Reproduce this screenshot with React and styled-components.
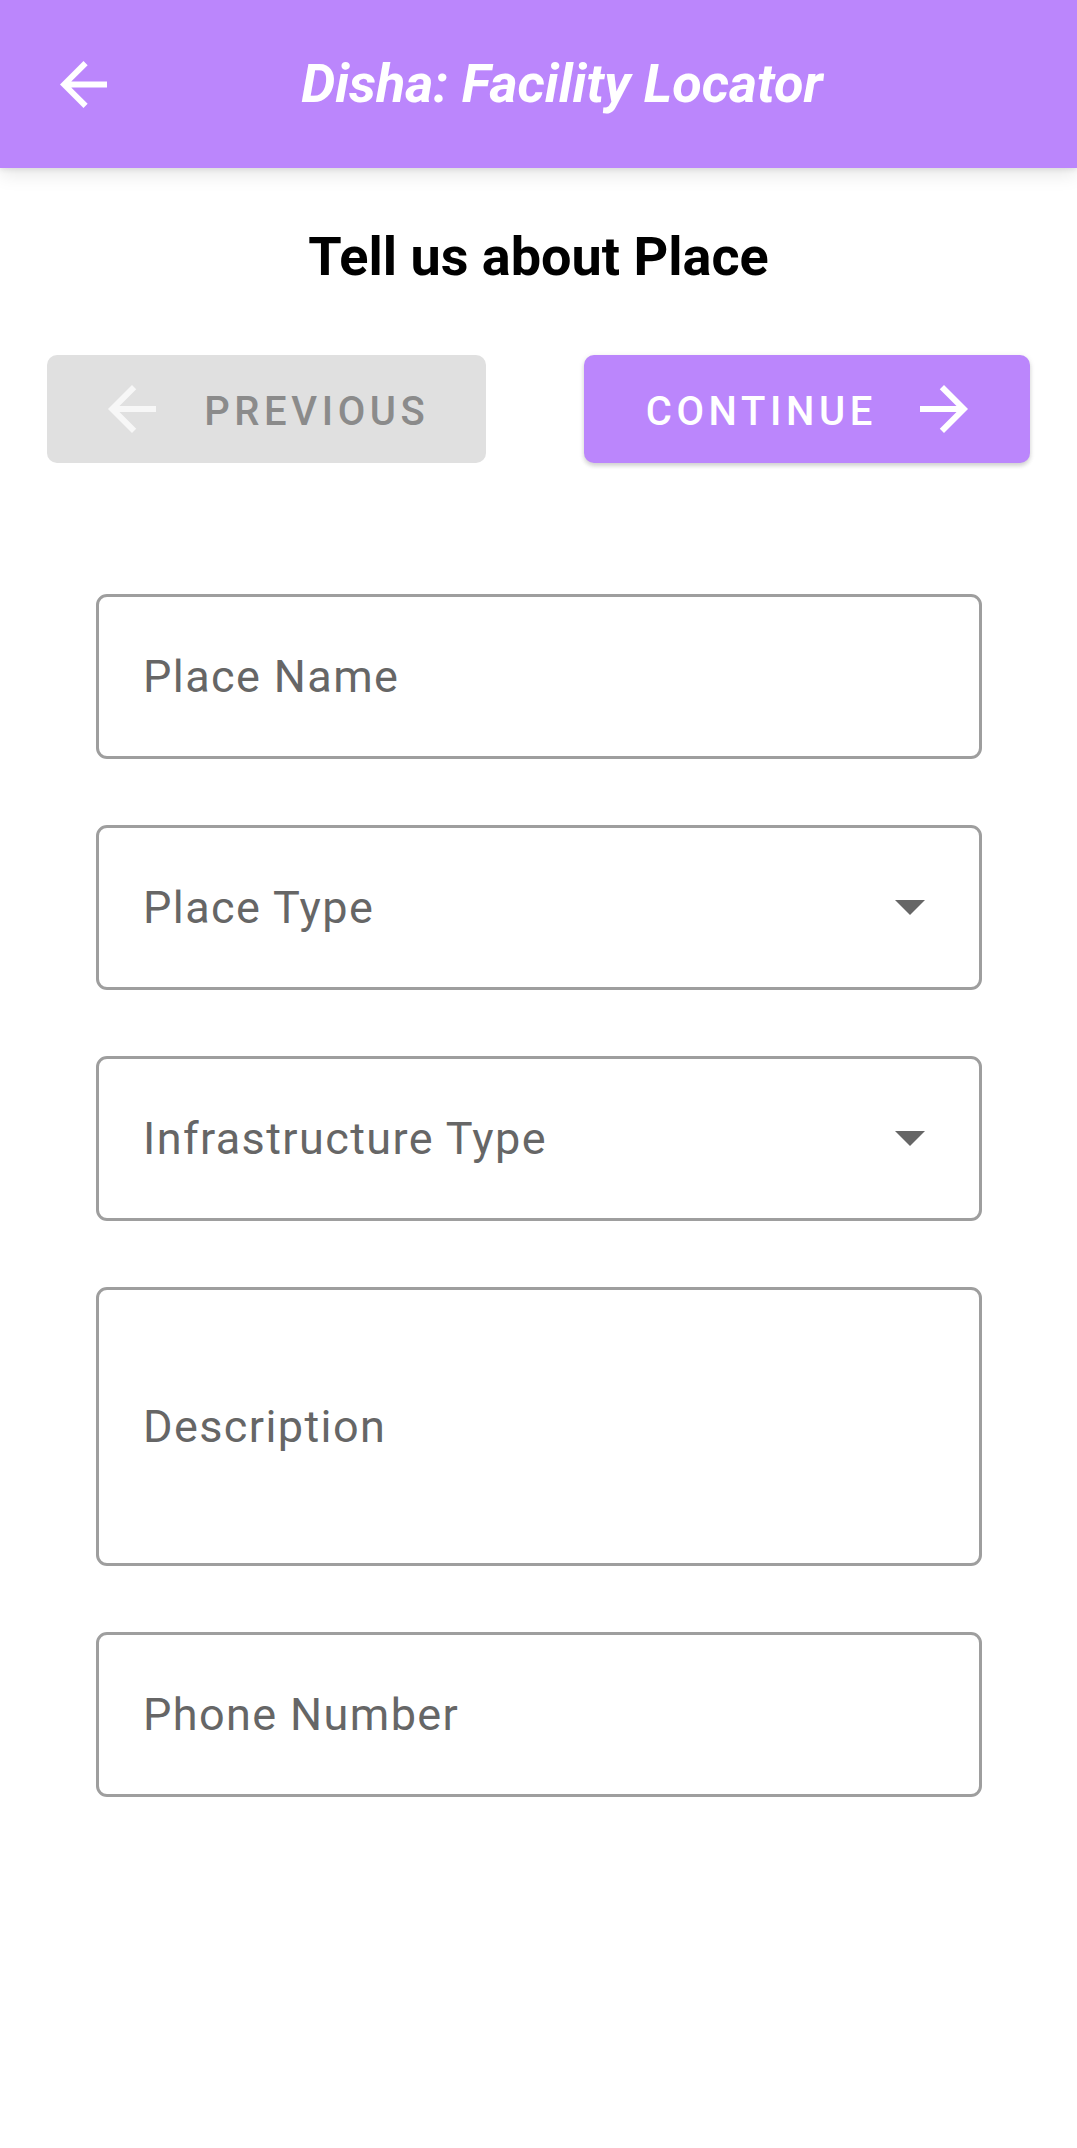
import React from "react";
import styled, { createGlobalStyle } from "styled-components";

const GlobalStyle = createGlobalStyle`
  html, body {
    margin: 0;
    padding: 0;
    background: #ffffff;
  }
  body {
    font-family: Roboto, "Noto Sans", "Liberation Sans", sans-serif;
    -webkit-font-smoothing: antialiased;
  }
  * { box-sizing: border-box; }
`;

const Page = styled.div`
  width: 1077px;
  min-height: 2148px;
  background: #ffffff;
  display: flex;
  flex-direction: column;
`;

const Header = styled.header`
  position: relative;
  z-index: 1;
  height: 168px;
  background: #bb86fc;
  display: flex;
  align-items: center;
  padding-left: 60px;
  box-shadow: 0 6px 18px rgba(0, 0, 0, 0.1), 0 2px 5px rgba(0, 0, 0, 0.08);
`;

const BackButton = styled.button`
  border: none;
  background: transparent;
  padding: 0;
  margin: 0;
  width: 47px;
  height: 47px;
  display: flex;
  align-items: center;
  justify-content: center;
  color: #ffffff;
  cursor: pointer;
`;

const HeaderIcon = styled.svg`
  width: 47px;
  height: 47px;
  fill: #ffffff;
`;

const HeaderTitle = styled.h1`
  flex: 1;
  margin: 0 60px 0 0;
  text-align: center;
  color: #ffffff;
  font-family: Roboto, "Liberation Sans", sans-serif;
  font-size: 54px;
  font-weight: 700;
  font-style: italic;
  line-height: 62px;
`;

const Heading = styled.h2`
  margin: 58px 0 0;
  text-align: center;
  color: #000000;
  font-family: Roboto, "Liberation Sans", sans-serif;
  font-size: 54px;
  font-weight: 700;
  line-height: 62px;
`;

const ButtonRow = styled.div`
  margin-top: 67px;
  padding: 0 47px;
  display: flex;
  justify-content: space-between;
`;

const StepButton = styled.button`
  width: ${(p) => p.$width}px;
  height: 108px;
  border: none;
  border-radius: 10px;
  background: ${(p) => (p.$primary ? "#bb86fc" : "#e0e0e0")};
  color: ${(p) => (p.$primary ? "#ffffff" : "#8b8b8b")};
  box-shadow: ${(p) =>
    p.$primary
      ? "0 3px 4px rgba(0,0,0,0.14), 0 1px 6px rgba(0,0,0,0.08)"
      : "none"};
  display: flex;
  align-items: center;
  justify-content: center;
  gap: 48px;
  padding: 0;
  cursor: pointer;
`;

const ButtonLabel = styled.span`
  font-family: Roboto, "Liberation Sans", sans-serif;
  font-size: 40px;
  font-weight: 500;
  letter-spacing: 4.6px;
  margin-right: -4.6px;
  padding-top: 5px;
  line-height: 1;
`;

const ButtonIcon = styled.svg`
  width: 48px;
  height: 48px;
  flex: none;
  fill: ${(p) => p.$color};
`;

const Form = styled.form`
  margin-top: 131px;
  padding: 0 95px 0 96px;
  display: flex;
  flex-direction: column;
  gap: 66px;
`;

const Field = styled.div`
  height: ${(p) => p.$height}px;
  border: 3px solid #9e9e9e;
  border-radius: 11px;
  padding: 0 54px 0 44px;
  display: flex;
  align-items: center;
  justify-content: space-between;
  background: #ffffff;
`;

const Placeholder = styled.span`
  font-family: Roboto, "Liberation Sans", sans-serif;
  font-size: 45px;
  font-weight: 400;
  letter-spacing: 1.4px;
  color: #666666;
  line-height: 1;
`;

const DropIcon = styled.svg`
  width: 30px;
  height: 15px;
  fill: #666666;
  flex: none;
`;

const ArrowBack = ({ color }) => (
  <ButtonIcon viewBox="4 4 16 16" $color={color}>
    <path d="M20 11H7.83l5.59-5.59L12 4l-8 8 8 8 1.41-1.41L7.83 13H20v-2z" />
  </ButtonIcon>
);

const ArrowForward = ({ color }) => (
  <ButtonIcon viewBox="4 4 16 16" $color={color}>
    <path d="M12 4l-1.41 1.41L16.17 11H4v2h12.17l-5.58 5.59L12 20l8-8z" />
  </ButtonIcon>
);

const fields = [
  { label: "Place Name", height: 165 },
  { label: "Place Type", height: 165, select: true },
  { label: "Infrastructure Type", height: 165, select: true },
  { label: "Description", height: 279 },
  { label: "Phone Number", height: 165 },
];

export default function App() {
  return (
    <>
      <GlobalStyle />
      <Page>
        <Header>
          <BackButton aria-label="Back">
            <HeaderIcon viewBox="4 4 16 16">
              <path d="M20 11H7.83l5.59-5.59L12 4l-8 8 8 8 1.41-1.41L7.83 13H20v-2z" />
            </HeaderIcon>
          </BackButton>
          <HeaderTitle>Disha: Facility Locator</HeaderTitle>
        </Header>

        <Heading>Tell us about Place</Heading>

        <ButtonRow>
          <StepButton $width={439} type="button">
            <ArrowBack color="#f7f7f7" />
            <ButtonLabel>PREVIOUS</ButtonLabel>
          </StepButton>
          <StepButton $width={446} $primary type="button">
            <ButtonLabel>CONTINUE</ButtonLabel>
            <ArrowForward color="#ffffff" />
          </StepButton>
        </ButtonRow>

        <Form onSubmit={(e) => e.preventDefault()}>
          {fields.map((f) => (
            <Field key={f.label} $height={f.height}>
              <Placeholder>{f.label}</Placeholder>
              {f.select && (
                <DropIcon viewBox="7 10 10 5">
                  <path d="M7 10l5 5 5-5z" />
                </DropIcon>
              )}
            </Field>
          ))}
        </Form>
      </Page>
    </>
  );
}
